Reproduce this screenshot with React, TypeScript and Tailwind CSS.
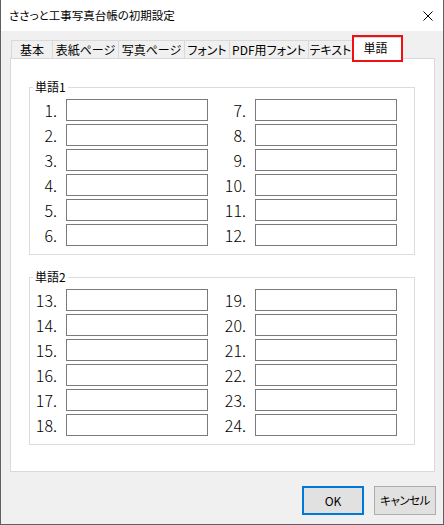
import React from 'react';

const tabs = [
  { label: '基本', w: 'w-[42px]' },
  { label: '表紙ページ', w: 'w-[67px]' },
  { label: '写真ページ', w: 'w-[67px]' },
  { label: 'フォント', w: 'w-[46px]' },
  { label: 'PDF用フォント', w: 'w-[80px]' },
  { label: 'テキスト', w: 'w-[45px]' },
];

function WordRow({ left, right }: { left: number; right: number }) {
  return (
    <div className="flex items-center h-[22px]">
      <span className="w-[27px] text-right text-[16px] leading-none font-light">{left}.</span>
      <input className="ml-[9px] w-[142px] h-[22px] border border-[#7a7a7a] bg-white outline-none" />
      <span className="w-[38px] text-right text-[16px] leading-none font-light">{right}.</span>
      <input className="ml-[9px] w-[142px] h-[22px] border border-[#7a7a7a] bg-white outline-none" />
    </div>
  );
}

function WordGroup({ title, start }: { title: string; start: number }) {
  const rows = [0, 1, 2, 3, 4, 5];
  return (
    <fieldset className="ml-[18px] w-[386px] border border-[#dcdcdc] pt-[5px] pb-[8px]">
      <legend className="ml-[3px] px-[2px] text-[12px] leading-[14px]">{title}</legend>
      <div className="flex flex-col gap-[3px]">
        {rows.map((i) => (
          <WordRow key={i} left={start + i} right={start + 6 + i} />
        ))}
      </div>
    </fieldset>
  );
}

export default function App() {
  return (
    <div className="w-[444px] h-[525px] flex flex-col bg-[#f0f0f0] border-x border-b border-[#5f5f5f] text-black font-['Noto_Sans_CJK_JP',sans-serif] [font-feature-settings:'palt']">
      {/* title bar */}
      <div className="h-[31px] bg-white flex items-center justify-between pl-[8px] pr-[10px]">
        <span className="text-[11.5px] leading-none">ささっと工事写真台帳の初期設定</span>
        <svg width="10" height="10" viewBox="0 0 10 10" className="shrink-0">
          <path d="M0.5 0.5L9.5 9.5M9.5 0.5L0.5 9.5" stroke="#000" strokeWidth="1" />
        </svg>
      </div>

      {/* tabs */}
      <div className="mt-[6px] ml-[10px] flex items-end h-[21px]">
        {tabs.map((t, i) => (
          <div
            key={t.label}
            className={`${t.w} h-[18px] ${i > 0 ? '-ml-px' : ''} border border-b-0 border-[#d9d9d9] bg-[#f0f0f0] flex items-center justify-center pt-px text-[12px] leading-none`}
          >
            {t.label}
          </div>
        ))}
        <div className="relative z-10 -ml-px w-[51px] h-[22px] -mb-px border border-b-0 border-[#d9d9d9] bg-white flex items-center justify-center pr-[4px] pb-[2px] text-[12px] leading-none">
          単語
          <div className="absolute -top-[3px] -left-px w-[51px] h-[27px] border-2 border-[#ee1111]" />
        </div>
      </div>

      {/* panel */}
      <div className="ml-[9px] w-[425px] h-[414px] border border-[#d9d9d9] bg-white pt-[21px] flex flex-col gap-[15px]">
        <WordGroup title="単語1" start={1} />
        <WordGroup title="単語2" start={13} />
      </div>

      {/* buttons */}
      <div className="mt-[14px] flex justify-end gap-[10px] pr-[7px]">
        <button className="w-[62px] h-[29px] bg-[#e1e1e1] border-2 border-[#0078d7] text-[12px]">OK</button>
        <button className="w-[62px] h-[29px] bg-[#e1e1e1] border border-[#adadad] text-[11.5px] tracking-[-0.5px]">キャンセル</button>
      </div>
    </div>
  );
}
